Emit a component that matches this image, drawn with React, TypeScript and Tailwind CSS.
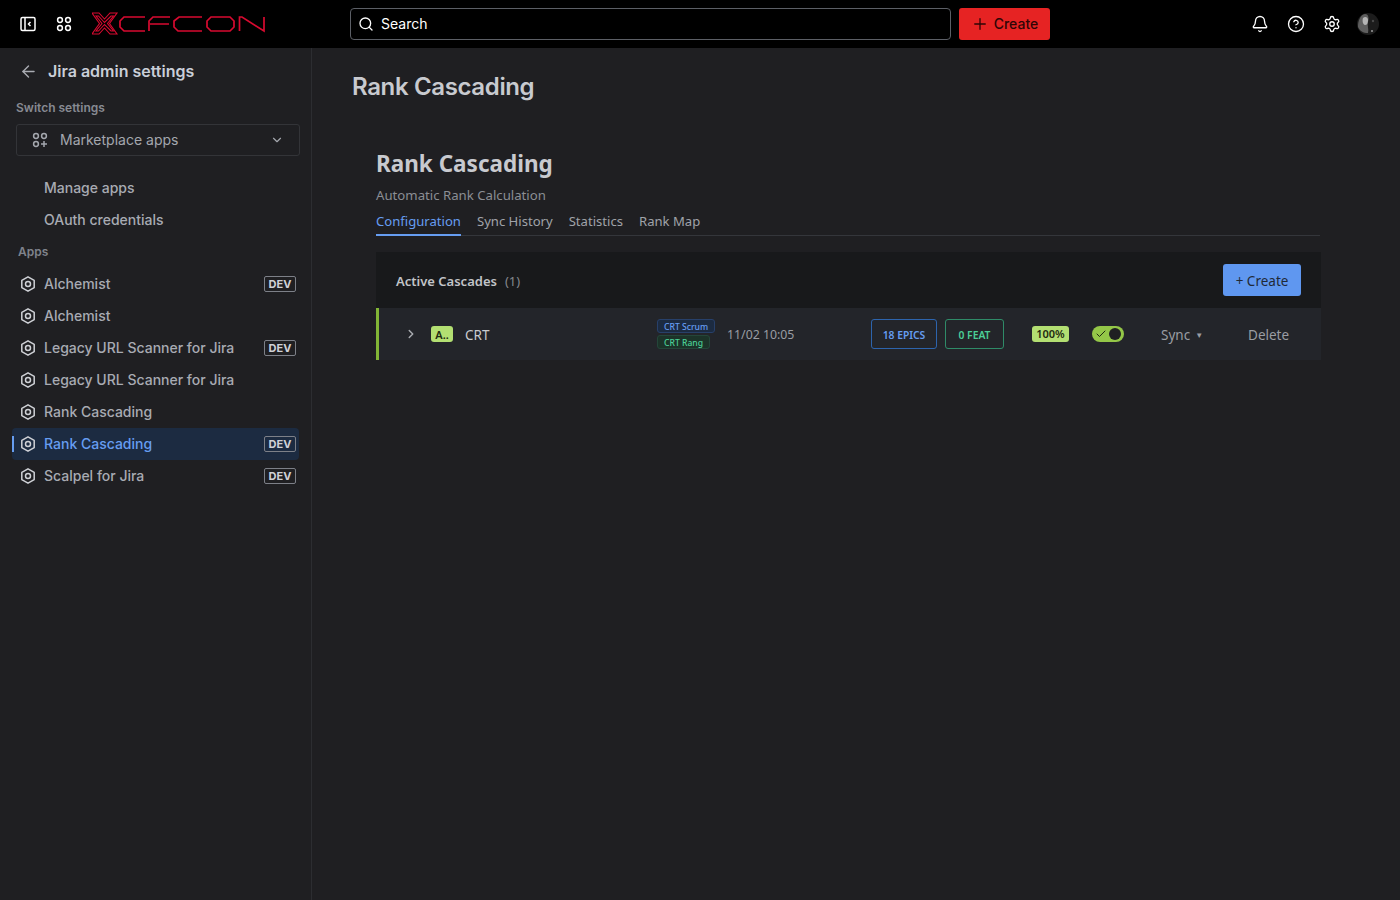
import React from 'react'
import { ArrowLeft, Bell, ChevronDown, ChevronRight, CircleHelp, Check, Plus, Search, Settings } from 'lucide-react'

function GridIcon({ plus }: { plus?: boolean }) {
  return (
    <svg width="16" height="16" viewBox="0 0 16 16" fill="none" stroke="currentColor" strokeWidth="1.5">
      <circle cx="4" cy="4" r="2.4" />
      <circle cx="12" cy="4" r="2.4" />
      <circle cx="4" cy="12" r="2.4" />
      {plus ? <path d="M12 9v6M9 12h6" /> : <circle cx="12" cy="12" r="2.4" />}
    </svg>
  )
}

function SidebarToggle() {
  return (
    <svg width="16" height="16" viewBox="0 0 16 16" fill="none" stroke="currentColor" strokeWidth="1.5">
      <rect x="1" y="1.5" width="14" height="13" rx="1.5" />
      <path d="M5 1.5v13" />
      <path d="M10.5 6 8.5 8l2 2" />
    </svg>
  )
}

function Logo() {
  return (
    <svg width="176" height="26" viewBox="0 0 176 26" fill="none" stroke="#d80a30" strokeWidth="1.7">
      <path d="M0 2h7l5.500 6L18 2h7l-7.500 10.500L25 23h-7l-5.500-6L7 23H0l7.500-10.500z" strokeWidth="1.100" />
      <path d="M4 5h2.500l6 6.500L19 5h2.500l-6 7.500 6 7.500H19l-6.500-6.500L6.500 20H4l6-7.500z" strokeWidth="1.100" />
      <path d="M53 6H32l-4 4v6l4 4h21" />
      <path d="M78 6H61l-4 4v10M58 13h19" />
      <path d="M110 6H87l-5 4v6l4 4h24" />
      <path d="M119 6h19l4 4v6l-4 4h-19l-4-4v-6z" />
      <path d="M147.500 20V6h2.500l22 14V6" />
    </svg>
  )
}

function Avatar() {
  return (
    <svg width="24" height="24" viewBox="0 0 24 24">
      <circle cx="12" cy="12" r="11" fill="#1c1c1c" />
      <path d="M2 15c0-6 2-12 7-13 4 0 4 5 3 8-1 4 1 7 0 11-5 0-8-2-10-6z" fill="#5e5e5e" />
      <path d="M7 6c2-2 5-1 5 2 0 3-1 5-3 5S6 9 7 6z" fill="#b4b4b4" />
      <circle cx="17" cy="9" r="1.200" fill="#4a4a4a" />
      <circle cx="16" cy="19" r="1" fill="#9a9a9a" />
    </svg>
  )
}

function TopBar() {
  return (
    <header className="h-12 shrink-0 bg-black flex items-center text-white">
      <div className="w-[350px] shrink-0 flex items-center pl-5">
        <SidebarToggle />
        <span className="ml-5 flex"><GridIcon /></span>
        <span className="ml-5 flex"><Logo /></span>
      </div>
      <div className="w-[601px] h-8 shrink-0 flex items-center gap-[7px] pl-[7px] bg-black border border-[#5c5f66] rounded">
        <Search size={16} strokeWidth={2} />
        <span className="text-sm text-white">Search</span>
      </div>
      <button className="ml-2 w-[91px] h-8 flex items-center justify-center gap-[5px] bg-[#e62323] rounded-[3px] text-sm font-medium text-[#2e0606]">
        <Plus size={18} strokeWidth={1.75} />
        Create
      </button>
      <div className="ml-auto flex items-center pr-5">
        <Bell size={18} strokeWidth={1.75} />
        <CircleHelp size={18} strokeWidth={1.75} className="ml-[18px]" />
        <Settings size={18} strokeWidth={1.75} className="ml-[18px]" />
        <span className="ml-[15px] flex"><Avatar /></span>
      </div>
    </header>
  )
}

const apps = [
  { name: 'Alchemist', dev: true },
  { name: 'Alchemist', dev: false },
  { name: 'Legacy URL Scanner for Jira', dev: true },
  { name: 'Legacy URL Scanner for Jira', dev: false },
  { name: 'Rank Cascading', dev: false },
  { name: 'Rank Cascading', dev: true, active: true },
  { name: 'Scalpel for Jira', dev: true },
]

function AppIcon() {
  return (
    <svg width="16" height="16" viewBox="0 0 16 16" fill="none" stroke="#cfd1d6" strokeWidth="1.5" strokeLinejoin="round" className="shrink-0">
      <path d="M8 .8l6.200 3.600v7.200L8 15.200l-6.200-3.600V4.400z" />
      <circle cx="8" cy="8" r="2.500" />
    </svg>
  )
}

function Sidebar() {
  return (
    <aside className="w-[312px] shrink-0 border-r border-[#2c2d31] pl-3 pr-3">
      <div className="h-[46px] flex items-center gap-[10px] pl-[7px]">
        <ArrowLeft size={19} strokeWidth={1.75} className="text-[#a9abb2]" />
        <span className="text-base font-semibold text-[#c9ced8]">Jira admin settings</span>
      </div>
      <div className="mt-[6px] pl-1 text-xs font-semibold leading-4 text-[#878a92]">Switch settings</div>
      <div className="mt-2 ml-1 h-8 w-[284px] flex items-center pl-[15px] pr-[15px] border border-[#333438] rounded-[3px] text-[#a4a7ae]">
        <GridIcon plus />
        <span className="ml-3 text-sm">Marketplace apps</span>
        <ChevronDown size={14} className="ml-auto" />
      </div>
      <div className="mt-4 text-sm font-medium text-[#a8abb3]">
        <div className="h-8 flex items-center pl-8">Manage apps</div>
        <div className="h-8 flex items-center pl-8">OAuth credentials</div>
      </div>
      <div className="h-8 flex items-center pl-[6px] text-xs font-semibold text-[#7f838c]">Apps</div>
      <div>
        {apps.map((app, i) => (
          <div
            key={i}
            className={
              app.active
                ? 'relative h-8 flex items-center gap-2 pl-2 pr-[3px] rounded bg-[#1c2b41] text-[#669df1]'
                : 'h-8 flex items-center gap-2 pl-2 pr-[3px] text-[#a8abb3]'
            }
          >
            {app.active && <span className="absolute left-0 top-2 h-4 w-[2px] bg-[#669df1]" />}
            <AppIcon />
            <span className="text-sm font-medium">{app.name}</span>
            {app.dev && (
              <span className="ml-auto h-4 w-8 flex items-center justify-center border border-[#7d8088] rounded-[2px] text-[11px] font-bold text-[#cfd1d6]">
                DEV
              </span>
            )}
          </div>
        ))}
      </div>
    </aside>
  )
}

function CascadeRow() {
  return (
    <div className="h-[52px] flex items-center bg-[#23252a] border-l-[3px] border-[#82b536] text-[#9a9da3]">
      <span className="ml-[25px] w-[14px] flex text-[#a8abb0]"><ChevronRight size={14} strokeWidth={2.5} /></span>
      <span className="ml-[13px] w-[22px] h-4 pt-[2px] flex items-center justify-center rounded-[3px] bg-[#b3df72] text-[11px] font-semibold text-[#1f2a10]">A..</span>
      <span className="ml-3 w-[192px] pt-[2px] text-[13.5px] text-[#c9cbcf]">CRT</span>
      <div className="w-[70px] flex flex-col items-start gap-[2px]">
        <span className="h-[14px] px-[6px] pt-[2px] flex items-center rounded-[3px] bg-[#1c2b41] border border-[#27406a] text-[8.6px] font-medium text-[#669df1]">CRT Scrum</span>
        <span className="h-[14px] px-[6px] pt-[2px] flex items-center rounded-[3px] bg-[#1c3329] border border-[#24463a] text-[8.6px] font-medium text-[#4bce97]">CRT Rang</span>
      </div>
      <span className="w-[144px] pt-[2px] text-[12.3px]">11/02 10:05</span>
      <span className="w-[66px] h-[30px] pt-[3px] flex items-center justify-center border border-[#2d64ad] rounded-[3px] text-[10.3px] font-semibold text-[#669df1]">18 EPICS</span>
      <span className="ml-2 w-[59px] h-[30px] pt-[3px] flex items-center justify-center border border-[#2f8b68] rounded-[3px] text-[10.3px] font-semibold text-[#4bce97]">0 FEAT</span>
      <span className="ml-7 w-[37px] h-4 pt-[1px] flex items-center justify-center rounded-[3px] bg-[#b3df72] text-[11px] font-semibold text-[#1f2a10]">100%</span>
      <span className="ml-[23px] w-8 h-4 flex items-center justify-between px-[3px] rounded-full bg-[#94c748] text-[#1f2a10]">
        <Check size={12} strokeWidth={2} />
        <span className="w-3 h-3 rounded-full bg-[#1f1f22]" />
      </span>
      <span className="ml-[37px] pt-[2px] text-[13.5px]">Sync</span>
      <span className="ml-[5px] pt-[2px] text-[8px] text-[#9a9da3]">▼</span>
      <span className="ml-[45px] pt-[2px] text-[13.5px]">Delete</span>
    </div>
  )
}

function Main() {
  return (
    <main className="flex-1 pl-10 pr-[79px]">
      <h1 className="mt-[22px] text-2xl font-semibold leading-[34px] tracking-[-0.36px] text-[#c8cacf]">Rank Cascading</h1>
      <div className="pl-6 font-['Noto_Sans',sans-serif]">
        <h2 className="mt-[41px] text-[22.5px] font-bold leading-[38px] text-[#c8cacf]">Rank Cascading</h2>
        <p className="mt-[2px] text-[13.2px] leading-5 text-[#8b8e94]">Automatic Rank Calculation</p>
        <div className="mt-1 mr-[1px] h-[27px] flex items-start gap-4 border-b border-[#34363b] text-[13.1px] text-[#a0a3a9]">
          <span className="h-[27px] leading-[21px] pt-[2px] border-b-2 border-[#669df1] text-[#669df1]">Configuration</span>
          <span className="leading-[21px] pt-[2px]">Sync History</span>
          <span className="leading-[21px] pt-[2px]">Statistics</span>
          <span className="leading-[21px] pt-[2px]">Rank Map</span>
        </div>
        <section className="mt-4">
          <div className="h-14 flex items-center pl-5 pr-5 bg-[#18191b]">
            <span className="pt-[3px] text-[13px] font-semibold text-[#c2c4c8]">Active Cascades</span>
            <span className="ml-2 pt-[3px] text-[13px] text-[#85888e]">(1)</span>
            <button className="ml-auto w-[78px] h-8 pt-[2px] flex items-center justify-center rounded-[3px] bg-[#5f97f0] text-[13.5px] text-[#1f2937]">+ Create</button>
          </div>
          <CascadeRow />
        </section>
      </div>
    </main>
  )
}

export default function App() {
  return (
    <div className="w-full h-[900px] flex flex-col overflow-hidden bg-[#1f1f22] font-['Inter',sans-serif]">
      <TopBar />
      <div className="flex flex-1">
        <Sidebar />
        <Main />
      </div>
    </div>
  )
}
